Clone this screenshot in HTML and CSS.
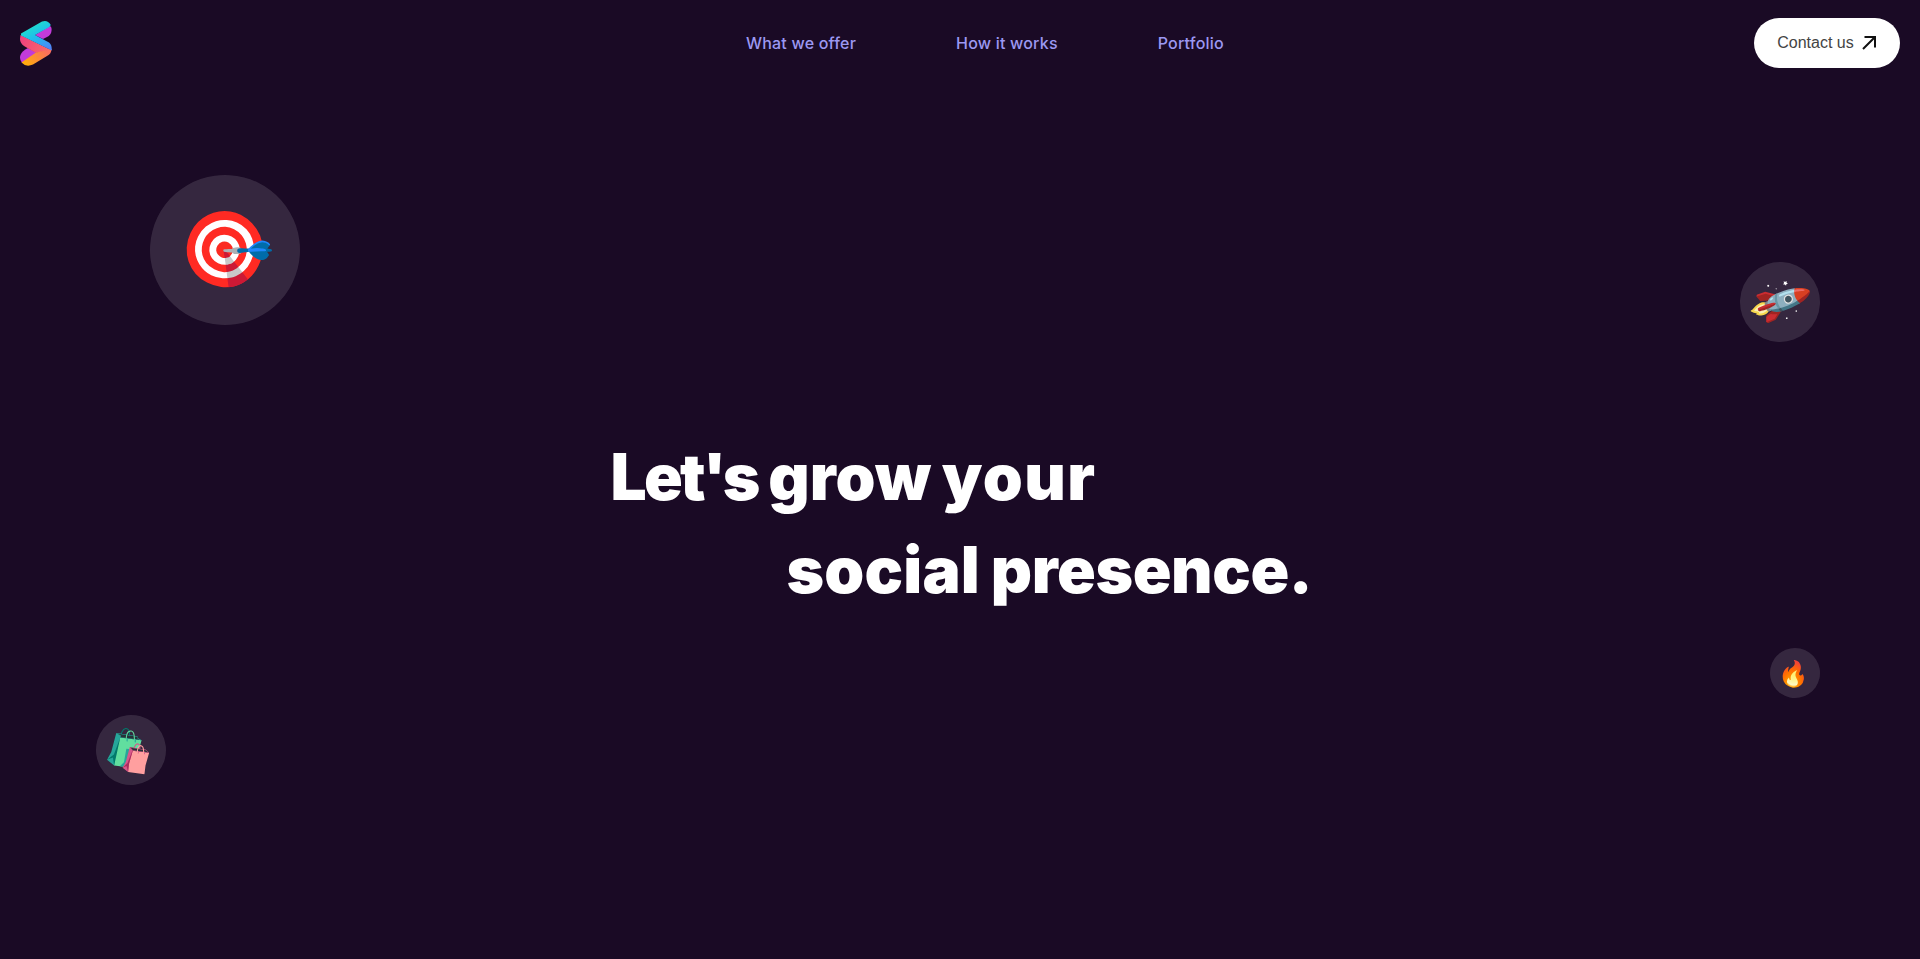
FILE: index.html
```html
<!DOCTYPE html>
<html lang="en">
<head>
<meta charset="utf-8">
<title>Let's grow your social presence</title>
<link rel="stylesheet" href="styles.css">
</head>
<body>
<header class="topbar">
  <a class="logo" href="#" aria-label="Home">
    <svg width="32" height="46" viewBox="20 20 32 46">
      <defs>
        <linearGradient id="g1" gradientUnits="userSpaceOnUse" x1="30" y1="22" x2="46" y2="50"><stop offset="0" stop-color="#1fe6c4"/><stop offset="0.5" stop-color="#1fbcee"/><stop offset="1" stop-color="#4f86f7"/></linearGradient>
        <linearGradient id="g2" gradientUnits="userSpaceOnUse" x1="20" y1="38" x2="50" y2="50"><stop offset="0" stop-color="#f0407f"/><stop offset="1" stop-color="#fb6a66"/></linearGradient>
        <linearGradient id="g3" gradientUnits="userSpaceOnUse" x1="46" y1="50" x2="28" y2="66"><stop offset="0" stop-color="#fb6f5e"/><stop offset="1" stop-color="#ffab0d"/></linearGradient>
      </defs>
      <path fill="#c23bd9" d="M35 35 L50 26 Q52 27 51.500 31 Q51 35 47 37 L43 39 Z"/>
      <path fill="#c23bd9" d="M28 48 L37 53 L22 63 Q19 59 20.500 55 Q22 51 28 48 Z"/>
      <path fill="url(#g2)" d="M20.500 35 L51 50 L36 53 L24 46 Q20 43 20 39 Z"/>
      <path fill="url(#g3)" d="M36 52.500 L51.500 49 Q51.500 54 47 56 L33 64.500 Q26 67.500 21.500 62.500 Z"/>
      <path fill="url(#g1)" d="M21 33.500 L42 21.500 Q47.500 19.500 50.500 24.500 Q51 26 49 27.200 L35 35 L49 42.500 Q52 44.500 51.800 50.500 L21 35.500 Z"/>
    </svg>
  </a>
  <nav class="nav">
    <a href="#">What we offer</a>
    <a href="#">How it works</a>
    <a href="#">Portfolio</a>
  </nav>
  <a class="contact" href="#">Contact us
    <svg width="14" height="14" viewBox="0 0 14 14" fill="none" stroke="#111" stroke-width="2"><path d="M1 13 L13 1 M2.500 1 H13 V11.500"/></svg>
  </a>
</header>
<main class="hero">
  <h1 class="headline">
    <span class="line"><span class="w-lets">Let's</span> <span class="w-grow">grow</span> <span class="w-your">your</span></span>
    <span class="line line-shift"><span class="w-social">social</span> <span class="w-presence">presence.</span></span>
  </h1>
</main>
<div class="bubble bubble-target">🎯</div>
<div class="bubble bubble-rocket">🚀</div>
<div class="bubble bubble-fire">🔥</div>
<div class="bubble bubble-bags">🛍️</div>
</body>
</html>
```
FILE: styles.css
```css
* { box-sizing: border-box; }
html, body { height: 100%; }
body {
  margin: 0;
  background: #1a0a25;
  color: #fff;
  font-family: "Inter", "Liberation Sans", sans-serif;
  overflow: hidden;
  display: flex;
  flex-direction: column;
}
.topbar {
  display: flex;
  align-items: center;
  padding: 18px 20px 0;
}
.logo { display: block; width: 32px; height: 46px; }
.logo svg { display: block; }
.nav {
  display: flex;
  gap: 100px;
  margin-left: 694px;
}
.nav a {
  color: #9c98f2;
  font-size: 16px;
  font-weight: 500;
  letter-spacing: 0.2px;
  text-decoration: none;
  white-space: nowrap;
}
.contact {
  margin-left: auto;
  display: flex;
  align-items: center;
  gap: 8px;
  height: 50px;
  width: 146px;
  padding-right: 1px;
  justify-content: center;
  background: #fff;
  border-radius: 25px;
  color: #444;
  font: 16px "Liberation Sans", sans-serif;
  text-decoration: none;
}
.hero {
  flex: 1;
  display: flex;
  justify-content: center;
  padding-top: 362px;
}
.headline {
  margin: 0;
  width: 699px;
  font-size: 64px;
  font-weight: 900;
  word-spacing: -2px;
  line-height: 93px;
}
.line { display: block; white-space: nowrap; }
.line-shift { margin-left: 176px; }
.w-lets { letter-spacing: -2.8px; }
.w-grow { letter-spacing: 0; }
.w-your { letter-spacing: 1.4px; }
.w-social { letter-spacing: 0.2px; }
.w-presence { letter-spacing: -0.4px; }
.bubble {
  position: absolute;
  display: flex;
  align-items: center;
  justify-content: center;
  border-radius: 50%;
  background: rgba(255, 255, 255, 0.12);
  font-family: "Noto Color Emoji", sans-serif;
  line-height: 1;
}
.bubble-target { left: 150px; top: 175px; width: 150px; height: 150px; font-size: 74px; transform: rotate(26deg); }
.bubble-rocket { left: 1740px; top: 262px; width: 80px; height: 80px; font-size: 43px; transform: rotate(25deg); }
.bubble-fire { left: 1770px; top: 648px; width: 50px; height: 50px; padding-top: 2px; font-size: 25px; transform: rotate(12deg); }
.bubble-bags { left: 96px; top: 715px; width: 70px; height: 70px; padding-top: 2px; font-size: 38px; transform: rotate(16deg); }
```
